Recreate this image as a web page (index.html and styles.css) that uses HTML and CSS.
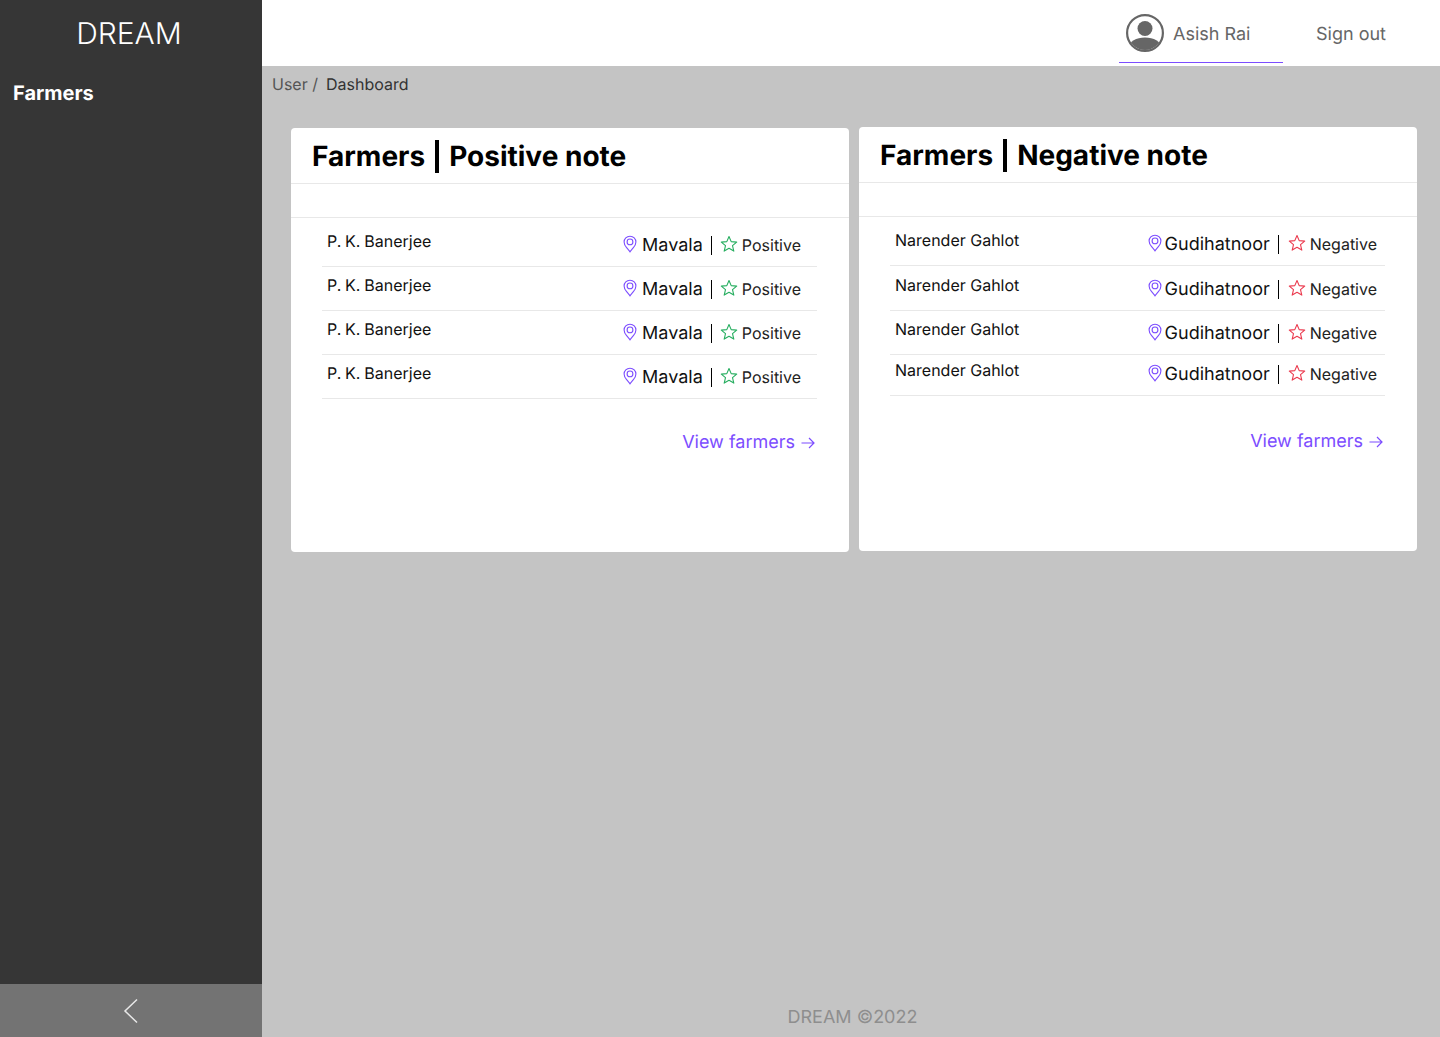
FILE: index.html
```html
<!DOCTYPE html>
<html lang="en">
<head>
<meta charset="utf-8">
<title>DREAM</title>
<link rel="stylesheet" href="styles.css">
</head>
<body>
<svg class="defs" width="0" height="0" aria-hidden="true">
  <symbol id="pin" viewBox="0 0 16 18"><path d="M8 1.200C4.600 1.200 2.100 3.800 2.100 7c0 2.200 1.100 4 2.500 5.700C5.700 14.100 7 15.500 8 16.800c1-1.300 2.300-2.700 3.400-4.100C12.800 11 13.900 9.200 13.900 7c0-3.200-2.500-5.800-5.900-5.800z" fill="none" stroke="currentColor" stroke-width="1.100"/><circle cx="8" cy="6.900" r="2.900" fill="none" stroke="currentColor" stroke-width="1.100"/></symbol>
  <symbol id="star" viewBox="0 0 18 18"><path d="M9 1.500l2.200 5.100 5.500.5-4.200 3.600 1.300 5.400L9 13.300l-4.800 2.800 1.300-5.400L1.300 7.100l5.500-.5z" fill="none" stroke="currentColor" stroke-width="1.100" stroke-linejoin="round"/></symbol>
</svg>
<div class="app">
  <aside class="sidebar">
    <div class="brand">DREAM</div>
    <nav class="side-nav"><a class="side-link">Farmers</a></nav>
    <div class="collapse">
      <svg class="chev" width="16" height="26" viewBox="0 0 16 26"><path d="M14 1.500L2 13l12 11.500" fill="none" stroke="#e8e8e8" stroke-width="1.500"/></svg>
    </div>
  </aside>
  <div class="main">
    <header class="topbar">
      <div class="user">
        <svg class="avatar" width="38" height="38" viewBox="0 0 38 38"><defs><clipPath id="c"><circle cx="19" cy="19" r="17"/></clipPath></defs><circle cx="19" cy="19" r="17.900" fill="none" stroke="#666" stroke-width="2.200"/><circle cx="19" cy="14.500" r="7.500" fill="#666"/><ellipse cx="19" cy="33" rx="16" ry="9.500" fill="#666" clip-path="url(#c)"/></svg>
        <span class="user-name">Asish Rai</span>
      </div>
      <a class="signout">Sign out</a>
    </header>
    <div class="crumbs"><span class="crumb-muted">User /</span><span class="crumb-current">Dashboard</span></div>
    <div class="cards">
      <section class="card card-pos">
        <h2 class="card-title"><span>Farmers</span><i class="bar"></i><span>Positive note</span></h2>
        <div class="card-spacer"></div>
        <ul class="rows rows-pos">
          <li class="row"><span class="name">P. K. Banerjee</span><span class="meta"><svg class="pin"><use href="#pin"/></svg><span class="place">Mavala</span><i class="sep"></i><svg class="star good"><use href="#star"/></svg><span class="note">Positive</span></span></li>
          <li class="row"><span class="name">P. K. Banerjee</span><span class="meta"><svg class="pin"><use href="#pin"/></svg><span class="place">Mavala</span><i class="sep"></i><svg class="star good"><use href="#star"/></svg><span class="note">Positive</span></span></li>
          <li class="row"><span class="name">P. K. Banerjee</span><span class="meta"><svg class="pin"><use href="#pin"/></svg><span class="place">Mavala</span><i class="sep"></i><svg class="star good"><use href="#star"/></svg><span class="note">Positive</span></span></li>
          <li class="row"><span class="name">P. K. Banerjee</span><span class="meta"><svg class="pin"><use href="#pin"/></svg><span class="place">Mavala</span><i class="sep"></i><svg class="star good"><use href="#star"/></svg><span class="note">Positive</span></span></li>
        </ul>
        <a class="view">View farmers <svg width="16" height="12" viewBox="0 0 16 12"><path d="M1.500 6h12.500M9 1l5 5-5 5" fill="none" stroke="currentColor" stroke-width="1.200"/></svg></a>
      </section>
      <section class="card card-neg">
        <h2 class="card-title"><span>Farmers</span><i class="bar"></i><span>Negative note</span></h2>
        <div class="card-spacer"></div>
        <ul class="rows rows-neg">
          <li class="row"><span class="name">Narender Gahlot</span><span class="meta"><svg class="pin"><use href="#pin"/></svg><span class="place">Gudihatnoor</span><i class="sep"></i><svg class="star bad"><use href="#star"/></svg><span class="note">Negative</span></span></li>
          <li class="row"><span class="name">Narender Gahlot</span><span class="meta"><svg class="pin"><use href="#pin"/></svg><span class="place">Gudihatnoor</span><i class="sep"></i><svg class="star bad"><use href="#star"/></svg><span class="note">Negative</span></span></li>
          <li class="row"><span class="name">Narender Gahlot</span><span class="meta"><svg class="pin"><use href="#pin"/></svg><span class="place">Gudihatnoor</span><i class="sep"></i><svg class="star bad"><use href="#star"/></svg><span class="note">Negative</span></span></li>
          <li class="row"><span class="name">Narender Gahlot</span><span class="meta"><svg class="pin"><use href="#pin"/></svg><span class="place">Gudihatnoor</span><i class="sep"></i><svg class="star bad"><use href="#star"/></svg><span class="note">Negative</span></span></li>
        </ul>
        <a class="view">View farmers <svg width="16" height="12" viewBox="0 0 16 12"><path d="M1.500 6h12.500M9 1l5 5-5 5" fill="none" stroke="currentColor" stroke-width="1.200"/></svg></a>
      </section>
    </div>
    <footer class="footer">DREAM ©2022</footer>
  </div>
</div>
</body>
</html>
```
FILE: styles.css
```css
* { box-sizing: border-box; }
html, body { margin: 0; height: 100%; }
body { font-family: Inter, "Liberation Sans", sans-serif; background: #c4c4c4; color: #000; overflow: hidden; text-rendering: geometricPrecision; }
.defs { position: absolute; }
.app { display: flex; height: 1037px; }
.sidebar { width: 262px; flex: none; background: #363636; display: flex; flex-direction: column; color: #fff; }
.brand { height: 66px; padding-top: 16px; text-align: center; font-size: 30px; line-height: 36px; font-weight: 300; margin-left: -4px; }
.side-nav { flex: 1; padding: 15px 13px 0; }
.side-link { font-size: 20px; line-height: 24px; font-weight: 700; display: block; }
.collapse { height: 53px; background: #737373; display: flex; align-items: center; justify-content: center; }
.main { flex: 1; min-width: 0; display: flex; flex-direction: column; }
.topbar { height: 66px; flex: none; background: #fff; display: flex; justify-content: flex-end; align-items: flex-start; padding-right: 54px; color: #666; font-size: 18px; line-height: 22px; }
.user { width: 164px; height: 63px; border-bottom: 1px solid #7c4dff; display: flex; align-items: center; gap: 9px; padding: 3px 0 0 7px; }
.user-name { margin-top: 4px; }
.avatar { flex: none; }
.signout { margin-left: 33px; margin-top: 24px; }
.crumbs { height: 61px; padding: 8px 10px 0; font-size: 16px; line-height: 20px; display: flex; gap: 8px; }
.crumb-muted { color: #555; }
.crumb-current { color: #333; }
.cards { display: flex; gap: 10px; padding-left: 29px; align-items: flex-start; }
.card { width: 558px; height: 424px; background: #fff; border-radius: 4px; display: flex; flex-direction: column; }
.card-pos { margin-top: 1px; }
.card-title { margin: 0; height: 56px; flex: none; padding: 9px 21px 0; border-bottom: 1px solid #e8e8e8; font-size: 28px; line-height: 38px; font-weight: 700; display: flex; align-items: flex-start; }
.bar { display: block; width: 4px; height: 33px; background: #000; margin: 3px 10px 0 10px; }
.card-spacer { height: 34px; flex: none; border-bottom: 1px solid #e8e8e8; }
.rows { list-style: none; margin: 0 32px 0 31px; padding: 0; }
.row { border-bottom: 1px solid #e8e8e8; display: flex; justify-content: space-between; height: 44px; padding: 0 16px 0 5px; }
.rows-pos .row:first-child { height: 49px; padding-top: 5px; }
.rows-neg .row { padding-right: 8px; }
.rows-neg .row:nth-child(1) { height: 49px; padding-top: 5px; }
.rows-neg .row:nth-child(2) { height: 45px; padding-top: 1px; }
.rows-neg .row:nth-child(4) { height: 41px; }
.name { font-size: 16px; line-height: 20px; color: #111; padding-top: 8px; }
.rows-pos .name { word-spacing: -0.7px; }
.meta { display: flex; align-items: center; height: 20px; margin-top: 12px; color: #111; }
.rows-neg .row:nth-child(4) .name { padding-top: 5px; }
.rows-neg .row:nth-child(4) .meta { margin-top: 9px; }
.pin { width: 16px; height: 18px; color: #7c4dff; flex: none; margin-top: -2px; }
.place { font-size: 18px; line-height: 22px; margin-left: 4px; margin-top: 2px; }
.rows-neg .place { margin-left: 2px; }
.sep { width: 1px; height: 19px; background: #000; margin: 0 9px 0 8px; }
.rows-neg .sep { margin-right: 10px; }
.star { width: 18px; height: 18px; flex: none; margin-left: -1px; margin-top: -2px; }
.good { color: #27ae60; }
.bad { color: #eb3b4f; }
.note { font-size: 16px; line-height: 20px; margin-left: 4px; color: #222; }
.view { align-self: flex-end; margin: 33px 33px 0 0; color: #7c4dff; font-size: 18px; line-height: 22px; display: flex; align-items: center; gap: 5px; }
.card-neg .view { margin-top: 35px; }
.footer { margin-top: auto; height: 30px; text-align: center; font-size: 18px; line-height: 22px; color: #8e8e8e; padding-left: 3px; }
```
